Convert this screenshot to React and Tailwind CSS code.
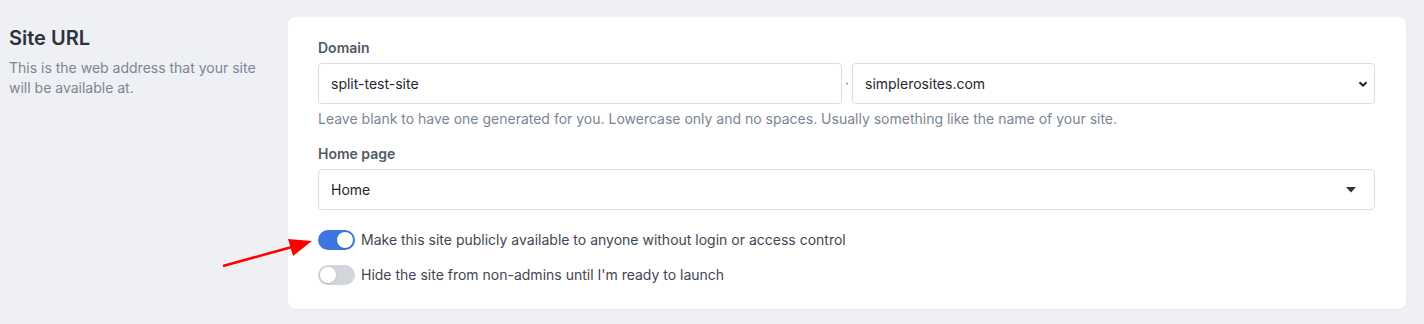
import React from "react";

function Toggle({ on }) {
  return (
    <span
      className={`relative inline-flex h-[20px] w-[37px] shrink-0 items-center rounded-full ${
        on ? "bg-[#3e75e2]" : "bg-[#d2d5dc]"
      }`}
    >
      <span
        className={`absolute top-[2px] h-[16px] w-[16px] rounded-full bg-white shadow-sm ${
          on ? "left-[19px]" : "left-[2px]"
        }`}
      />
    </span>
  );
}

export default function App() {
  return (
    <div
      className="relative min-h-[324px] w-full bg-[#eff0f4] pt-[17px]"
      style={{ fontFamily: "Inter, 'Noto Sans', sans-serif" }}
    >
      <div className="flex">
        <div className="w-[288px] shrink-0 pl-[9px] pt-[7px]">
          <h2 className="text-[20px] font-semibold leading-[28px] text-[#2b3340]">Site URL</h2>
          <p className="mt-[6px] w-[262px] text-[14px] leading-[20px] text-[#7b8594]">
            This is the web address that your site will be available at.
          </p>
        </div>
        <div className="mr-[18px] flex-1 rounded-lg bg-white pb-[24px] pl-[30px] pr-[31px] pt-[21px] shadow-[0_1px_2px_rgba(0,0,0,0.04)]">
          <label className="block text-[14px] font-semibold leading-[20px] text-[#525a66]">Domain</label>
          <div className="mt-[5px] flex items-center">
            <div className="flex h-[41px] w-[524px] shrink-0 items-center rounded border border-[#dcdee3] px-[12px] text-[14px] text-[#1f2630]">
              split-test-site
            </div>
            <span className="w-[10px] shrink-0 text-center text-[12px] leading-none text-[#555]">·</span>
            <div className="flex h-[41px] min-w-0 flex-1 items-center justify-between rounded border border-[#dcdee3] pl-[12px] pr-[6px] text-[14px] text-[#1f2630]">
              <span>simplerosites.com</span>
              <svg width="10" height="10" viewBox="0 0 10 10">
                <path d="M1.5 3.2 L5 6.7 L8.5 3.2" fill="none" stroke="#222" strokeWidth="2" />
              </svg>
            </div>
          </div>
          <p className="mt-[5px] text-[14px] leading-[20px] text-[#7b8594]">
            Leave blank to have one generated for you. Lowercase only and no spaces. Usually something like the name of your site.
          </p>
          <label className="mt-[15px] block text-[14px] font-semibold leading-[20px] text-[#525a66]">Home page</label>
          <div className="mt-[5px] flex h-[41px] items-center justify-between rounded border border-[#dcdee3] pl-[12px] pr-[18px] text-[14px] text-[#1f2630]">
            <span>Home</span>
            <svg width="10" height="6" viewBox="0 0 10 6">
              <path d="M0 0 L10 0 L5 5.5 Z" fill="#333" />
            </svg>
          </div>
          <div className="mt-[20px] flex items-center gap-[6px]">
            <Toggle on />
            <span className="text-[14px] leading-[20px] text-[#414752]">
              Make this site publicly available to anyone without login or access control
            </span>
          </div>
          <div className="mt-[15px] flex items-center gap-[6px]">
            <Toggle />
            <span className="text-[14px] leading-[20px] text-[#414752]">
              Hide the site from non-admins until I'm ready to launch
            </span>
          </div>
        </div>
      </div>
      <svg className="pointer-events-none absolute left-0 top-0" width="1424" height="324">
        <line x1="223" y1="266" x2="292" y2="247" stroke="#f00" strokeWidth="2.5" />
        <path d="M312 241 L288 239 L293 256 Z" fill="#f00" />
      </svg>
    </div>
  );
}
